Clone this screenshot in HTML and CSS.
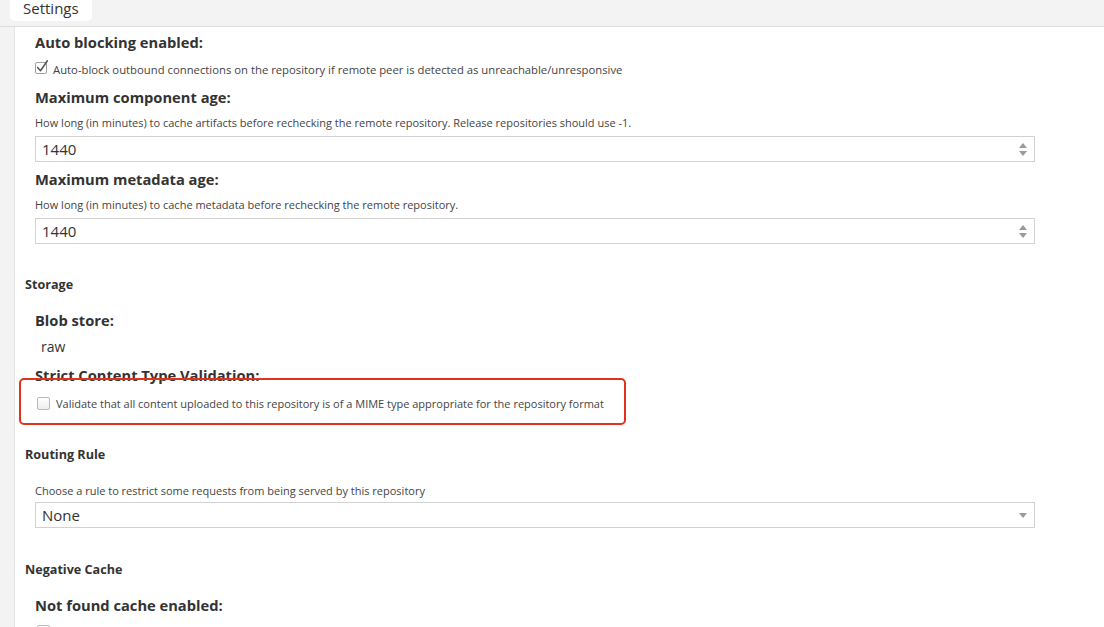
FILE: index.html
```html
<!DOCTYPE html>
<html>
<head>
<meta charset="utf-8">
<title>Settings</title>
<link rel="stylesheet" href="styles.css">
</head>
<body>
<div class="topbar"><div class="tab">Settings</div></div>
<div class="main">
  <div class="rail"></div>
  <div class="content">
    <div class="field">
      <div class="label l-first">Auto blocking enabled:</div>
      <label class="check-row cr-first">
        <span class="cb cb-checked">
          <svg width="16" height="16" viewBox="0 0 16 16"><rect x="0.5" y="3.5" width="11" height="11" rx="1.5" fill="#fff" stroke="#a0a0a0"/><path d="M2.6 8.6 L5.5 11.7 L12.4 1.8" fill="none" stroke="#555" stroke-width="1.5" stroke-linecap="round" stroke-linejoin="round"/></svg>
        </span>
        <span class="check-text wide">Auto-block outbound connections on the repository if remote peer is detected as unreachable/unresponsive</span>
      </label>
    </div>
    <div class="field">
      <div class="label l-2">Maximum component age:</div>
      <div class="help h-1">How long (in minutes) to cache artifacts before rechecking the remote repository. Release repositories should use -1.</div>
      <div class="input">
        <span class="value">1440</span>
        <span class="spinner"><span class="tri-up"></span><span class="tri-down"></span></span>
      </div>
    </div>
    <div class="field">
      <div class="label l-3">Maximum metadata age:</div>
      <div class="help h-1">How long (in minutes) to cache metadata before rechecking the remote repository.</div>
      <div class="input">
        <span class="value">1440</span>
        <span class="spinner"><span class="tri-up"></span><span class="tri-down"></span></span>
      </div>
    </div>

    <div class="section s-storage">Storage</div>
    <div class="field">
      <div class="label l-blob">Blob store:</div>
      <div class="static">raw</div>
    </div>
    <div class="field annotated">
      <div class="label l-strict">Strict Content Type Validation:</div>
      <label class="check-row cr-strict">
        <span class="cb cb-empty"></span>
        <span class="check-text">Validate that all content uploaded to this repository is of a MIME type appropriate for the repository format</span>
      </label>
      <div class="highlight"></div>
    </div>

    <div class="section s-routing">Routing Rule</div>
    <div class="field">
      <div class="help h-routing">Choose a rule to restrict some requests from being served by this repository</div>
      <div class="input select">
        <span class="value">None</span>
        <span class="tri-down sel-arrow"></span>
      </div>
    </div>

    <div class="section s-neg">Negative Cache</div>
    <div class="field">
      <div class="label l-notfound">Not found cache enabled:</div>
      <label class="check-row cr-last">
        <span class="cb cb-empty"></span>
      </label>
    </div>
  </div>
</div>
</body>
</html>
```

FILE: styles.css
```css
html, body {
  margin: 0;
  padding: 0;
  background: #fff;
  height: 100%;
  overflow: hidden;
}
body {
  font-family: "Open Sans", Lato, "Liberation Sans", sans-serif;
  color: #333;
}
.topbar {
  height: 26px;
  background: #f3f3f3;
  border-bottom: 1px solid #dcdcdc;
}
.tab {
  margin-left: 10px;
  width: 82px;
  height: 21px;
  box-sizing: border-box;
  padding-left: 13px;
  background: #fff;
  border-radius: 0 0 5px 5px;
  font-size: 15px;
  line-height: 16px;
  color: #333;
}
.main {
  display: flex;
  height: 600px;
}
.rail {
  width: 14px;
  background: #f3f3f3;
  border-right: 1px solid #e6e6e6;
  flex: none;
}
.content {
  flex: 1;
  padding-left: 10px;
}
.field {
  padding-left: 10px;
}
.label {
  font-size: 14.7px;
  font-weight: 700;
  line-height: 20px;
  color: #333;
  white-space: nowrap;
}
.l-first { margin-top: 5px; }
.l-2 { margin-top: 10px; }
.l-3 { margin-top: 7px; }
.l-blob { margin-top: 17px; }
.l-strict { margin-top: 9px; }
.l-notfound { margin-top: 17px; }

.check-row {
  display: flex;
  align-items: center;
  height: 16px;
  font-size: 11px;
  color: #444;
}
.cr-first { margin-top: 9px; }
.cr-strict { margin-top: 10px; padding-left: 2px; }
.cr-last { margin-top: 8px; padding-left: 2px; }
.cb {
  flex: none;
  display: inline-block;
}
.cb-checked {
  width: 16px;
  height: 16px;
  margin-right: 2px;
  margin-top: -4px;
}
.cb-checked svg { display: block; }
.cb-empty {
  width: 11px;
  height: 11px;
  border: 1px solid #b9b9b9;
  border-radius: 2px;
  background: linear-gradient(#fff, #ededed);
  margin-right: 6px;
}
.check-text { white-space: nowrap; }
.check-text.wide { font-size: 11.3px; }

.help {
  font-size: 11px;
  line-height: 14px;
  color: #444;
  white-space: nowrap;
}
.h-1 { margin-top: 9px; }
.h-routing { margin-top: 21px; }

.input {
  margin-top: 6px;
  width: 1000px;
  height: 26px;
  box-sizing: border-box;
  border: 1px solid #d2d2d2;
  display: flex;
  align-items: center;
  justify-content: space-between;
  padding: 0 7px 0 6px;
  font-size: 15px;
  color: #333;
}
.select { margin-top: 4px; }
.value { line-height: 20px; }
.spinner {
  display: flex;
  flex-direction: column;
  gap: 3px;
}
.tri-up, .tri-down {
  display: block;
  width: 0;
  height: 0;
  border-left: 4px solid transparent;
  border-right: 4px solid transparent;
}
.tri-up { border-bottom: 5px solid #9a9a9a; }
.tri-down { border-top: 5px solid #9a9a9a; }
.sel-arrow { margin-top: 1px; }

.static {
  margin-top: 8px;
  padding-left: 6px;
  font-size: 14px;
  line-height: 18px;
  color: #333;
}
.section {
  font-size: 12.6px;
  font-weight: 700;
  line-height: 16px;
  color: #333;
}
.s-storage { margin-top: 33px; }
.s-routing { margin-top: 36px; }
.s-neg { margin-top: 34px; }

.annotated { position: relative; }
.highlight {
  position: absolute;
  left: -6px;
  top: 13px;
  width: 607px;
  height: 47px;
  box-sizing: border-box;
  border: 2px solid #e0321c;
  border-radius: 5px;
  pointer-events: none;
}
```
